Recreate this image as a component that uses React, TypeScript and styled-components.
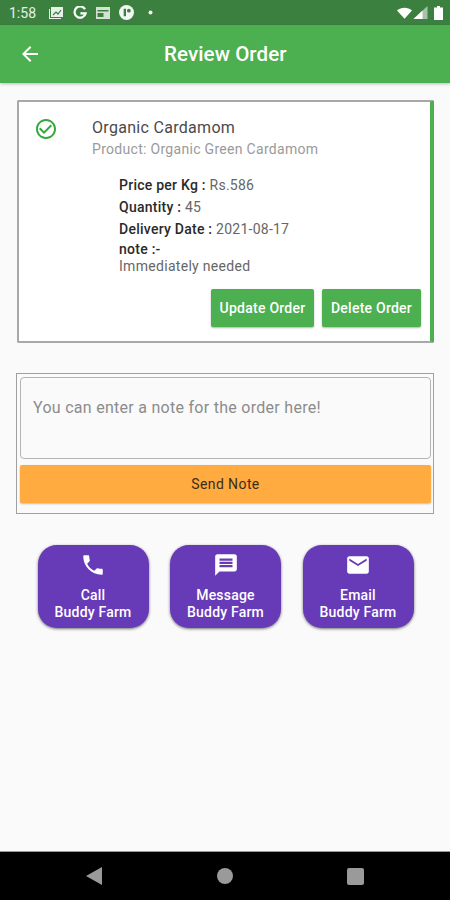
import styled, { createGlobalStyle } from "styled-components";
import { MdArrowBack, MdCheckCircleOutline, MdPhone, MdMessage, MdEmail } from "react-icons/md";

const GlobalStyle = createGlobalStyle`
  html, body {
    margin: 0;
    padding: 0;
    background: #fafafa;
    font-family: Roboto, "Liberation Sans", sans-serif;
  }
  * { box-sizing: border-box; }
`;

const Screen = styled.div`
  width: 450px;
  height: 900px;
  display: flex;
  flex-direction: column;
  background: #fafafa;
  overflow: hidden;
`;

const StatusBar = styled.div`
  height: 25px;
  background: #3c8040;
  display: flex;
  align-items: center;
  justify-content: space-between;
  padding: 0 7px 0 9px;
  color: #e8f0e8;
`;

const StatusLeft = styled.div`
  display: flex;
  align-items: center;
  gap: 9px;
`;

const StatusRight = styled.div`
  display: flex;
  align-items: center;
  gap: 1px;
`;

const Clock = styled.span`
  font-size: 14px;
  width: 30px;
`;

const AppBar = styled.div`
  height: 58px;
  background: #4caf50;
  display: flex;
  align-items: center;
  padding-left: 18px;
  color: #fff;
  box-shadow: 0 1px 3px rgba(0, 0, 0, 0.25);
  position: relative;
`;

const BackIcon = styled(MdArrowBack)`
  width: 24px;
  height: 24px;
`;

const Title = styled.h1`
  margin: 0 0 0 122px;
  font-size: 20.5px;
  line-height: 26px;
  font-weight: 500;
  letter-spacing: 0.1px;
`;

const Content = styled.div`
  flex: 1;
  display: flex;
  flex-direction: column;
  padding: 17px 16px 0;
`;

const OrderCard = styled.div`
  height: 243px;
  margin-left: 1px;
  background: #fff;
  border: 1px solid #a8a8a8;
  border-width: 2px 4px 2px 2px;
  border-right-color: #4caf50;
  border-radius: 2px;
  display: flex;
  flex-direction: column;
  padding: 7px 9px 0 0;
`;

const CardHead = styled.div`
  display: flex;
`;

const CheckIcon = styled(MdCheckCircleOutline)`
  width: 24px;
  height: 24px;
  color: #34a83c;
  margin: 8px 0 0 15px;
`;

const HeadText = styled.div`
  margin: 8px 0 0 34px;
`;

const ProductName = styled.div`
  font-size: 16px;
  line-height: 22px;
  color: #4a4a4a;
  letter-spacing: 0.3px;
`;

const ProductSub = styled.div`
  font-size: 14px;
  line-height: 20px;
  color: #9a9a9a;
  letter-spacing: 0.3px;
`;

const Details = styled.div`
  margin: 15px 0 0 100px;
  font-size: 14px;
  color: #666;
`;

const DetailRow = styled.div`
  line-height: 22px;
  letter-spacing: 0.25px;
`;

const Label = styled.span`
  font-weight: 500;
  color: #2a2a2a;
`;

const NoteLabel = styled.div`
  font-weight: 500;
  color: #2a2a2a;
  line-height: 15px;
  margin-top: 2px;
  letter-spacing: 0.25px;
`;

const NoteText = styled.div`
  line-height: 18px;
  letter-spacing: 0.3px;
`;

const CardActions = styled.div`
  display: flex;
  justify-content: flex-end;
  gap: 8px;
  margin-top: 14px;
`;

const GreenButton = styled.button<{ $w: number }>`
  width: ${(p) => p.$w}px;
  height: 38px;
  border: none;
  border-radius: 2px;
  background: #4caf50;
  color: #fff;
  font: 500 14px Roboto, sans-serif;
  letter-spacing: 0.25px;
  padding: 0;
  box-shadow: 0 1px 2px rgba(0, 0, 0, 0.3);
`;

const NoteCard = styled.div`
  margin-top: 30px;
  height: 141px;
  border: 1.5px solid #a0a0a0;
  padding: 3px 2px 0 3px;
  display: flex;
  flex-direction: column;
`;

const NoteInput = styled.div`
  height: 82px;
  border: 1px solid #b4b4b4;
  border-radius: 4px;
  padding: 20px 12px;
  font-size: 16px;
  line-height: 20px;
  color: #8c8c8c;
  letter-spacing: 0.28px;
`;

const SendButton = styled.button`
  margin-top: 6px;
  height: 38px;
  border: none;
  border-radius: 2px;
  background: #ffab40;
  color: #3a2c1a;
  font: 400 14px Roboto, sans-serif;
  letter-spacing: 0.4px;
  box-shadow: 0 1px 2px rgba(0, 0, 0, 0.25);
`;

const Contacts = styled.div`
  display: flex;
  justify-content: center;
  gap: 21.5px;
  margin: 31px 0 0 1px;
`;

const ContactButton = styled.button`
  width: 111px;
  height: 83px;
  border: none;
  border-radius: 19px;
  background: #673ab7;
  color: #fff;
  display: flex;
  flex-direction: column;
  align-items: center;
  padding: 7px 0 0;
  font: 500 14px/17px Roboto, sans-serif;
  letter-spacing: 0.2px;
  box-shadow: 0 1px 3px rgba(0, 0, 0, 0.55);
  svg {
    width: 26px;
    height: 26px;
    margin-bottom: 9px;
  }
`;

const NavBar = styled.div`
  height: 49px;
  background: #000;
  border-top: 1px solid #999;
  display: flex;
  align-items: center;
  justify-content: center;
  gap: 114.5px;
`;

function NotifIcons() {
  return (
    <>
      <svg width="16" height="14" viewBox="0 0 16 14" fill="#e8f0e8">
        <path d="M3 1h12v10H3z" />
        <path d="M1 3v10h12v-1H2V3z" />
        <path d="M5 9l3-3 2 2 3-4" stroke="#3c8040" strokeWidth="1.2" fill="none" />
      </svg>
      <svg width="14" height="14" viewBox="0 0 14 14" fill="none" stroke="#fff" strokeWidth="2.2">
        <path d="M12 3.2A5.6 5.6 0 1 0 12.6 7.4H7.4" />
      </svg>
      <svg width="14" height="12" viewBox="0 0 14 12" fill="#d4e2d4">
        <path d="M0 0h14v12H0z" />
        <path d="M1.500 3h11v1.500h-11zM1.500 6h6v4h-6z" fill="#3c8040" />
      </svg>
      <svg width="15" height="15" viewBox="0 0 16 16">
        <circle cx="8" cy="8" r="8" fill="#f2f6f2" />
        <path d="M5 4h2.500v8H5z" fill="#3c8040" />
        <circle cx="10.500" cy="6" r="2" fill="#3c8040" />
      </svg>
      <svg width="5" height="5" viewBox="0 0 5 5" style={{ marginLeft: 5 }}>
        <circle cx="2.500" cy="2.500" r="2" fill="#f2f6f2" />
      </svg>
    </>
  );
}

function SystemIcons() {
  return (
    <>
      <svg width="15" height="12" viewBox="0 0 16 12" fill="#fff">
        <path d="M0 3.200C4.500-.6 11.500-.6 16 3.200L8 12z" />
      </svg>
      <svg width="15" height="13" viewBox="0 0 14 13">
        <path d="M0 13L14 0v13z" fill="#a9c0aa" />
        <path d="M0 13l9-8.400V13z" fill="#fff" />
      </svg>
      <svg width="9" height="14" viewBox="0 0 9 14" fill="#fff" style={{ marginLeft: 5 }}>
        <path d="M3 0h3v1.500h3V14H0V1.500h3z" />
      </svg>
    </>
  );
}

export default function App() {
  return (
    <>
      <GlobalStyle />
      <Screen>
        <StatusBar>
          <StatusLeft>
            <Clock>1:58</Clock>
            <NotifIcons />
          </StatusLeft>
          <StatusRight>
            <SystemIcons />
          </StatusRight>
        </StatusBar>
        <AppBar>
          <BackIcon />
          <Title>Review Order</Title>
        </AppBar>
        <Content>
          <OrderCard>
            <CardHead>
              <CheckIcon />
              <HeadText>
                <ProductName>Organic Cardamom</ProductName>
                <ProductSub>Product: Organic Green Cardamom</ProductSub>
              </HeadText>
            </CardHead>
            <Details>
              <DetailRow><Label>Price per Kg : </Label>Rs.586</DetailRow>
              <DetailRow><Label>Quantity : </Label>45</DetailRow>
              <DetailRow><Label>Delivery Date : </Label>2021-08-17</DetailRow>
              <NoteLabel>note :-</NoteLabel>
              <NoteText>Immediately needed</NoteText>
            </Details>
            <CardActions>
              <GreenButton $w={103}>Update Order</GreenButton>
              <GreenButton $w={99}>Delete Order</GreenButton>
            </CardActions>
          </OrderCard>
          <NoteCard>
            <NoteInput>You can enter a note for the order here!</NoteInput>
            <SendButton>Send Note</SendButton>
          </NoteCard>
          <Contacts>
            <ContactButton><MdPhone />Call<br />Buddy Farm</ContactButton>
            <ContactButton><MdMessage />Message<br />Buddy Farm</ContactButton>
            <ContactButton><MdEmail />Email<br />Buddy Farm</ContactButton>
          </Contacts>
        </Content>
        <NavBar>
          <svg width="16" height="18" viewBox="0 0 16 18"><path d="M16 0v18L0 9z" fill="#9a9a9a" /></svg>
          <svg width="16" height="16" viewBox="0 0 16 16"><circle cx="8" cy="8" r="8" fill="#9a9a9a" /></svg>
          <svg width="17" height="17" viewBox="0 0 17 17"><rect width="17" height="17" rx="2" fill="#9a9a9a" /></svg>
        </NavBar>
      </Screen>
    </>
  );
}
